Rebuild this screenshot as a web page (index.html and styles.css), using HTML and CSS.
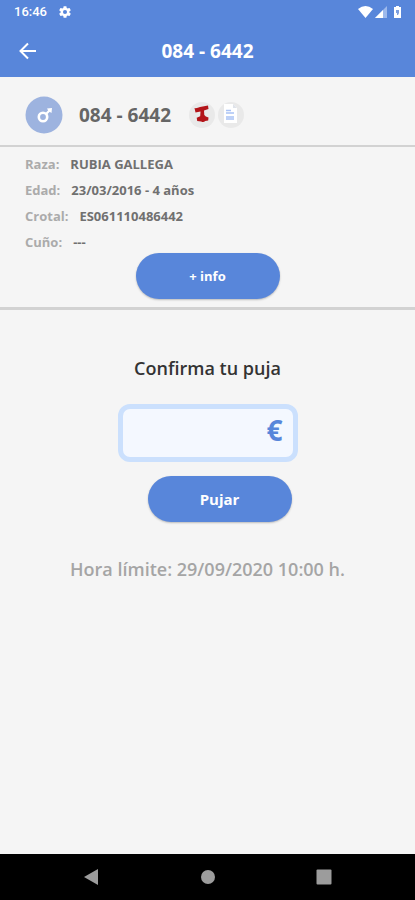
FILE: index.html
```html
<!DOCTYPE html>
<html lang="es">
<head>
<meta charset="utf-8">
<meta name="viewport" content="width=device-width, initial-scale=1">
<title>Puja</title>
<link rel="stylesheet" href="styles.css">
</head>
<body>
<div class="status">
  <span class="clock">16:46</span>
  <svg class="gear" width="14" height="14" viewBox="0 0 24 24" aria-hidden="true"><path fill="#fff" fill-rule="evenodd" d="M19.4 13a7.500 7.500 0 0 0 0-2l2.200-1.700a.5.5 0 0 0 .1-.6l-2-3.500a.5.5 0 0 0-.6-.2l-2.500 1a7.300 7.300 0 0 0-1.700-1L14.500 2.400a.5.5 0 0 0-.5-.4h-4a.5.5 0 0 0-.5.4L9.100 5a7.700 7.700 0 0 0-1.700 1l-2.500-1a.5.5 0 0 0-.6.200l-2 3.500a.5.5 0 0 0 .1.600L4.600 11a7.900 7.900 0 0 0 0 2l-2.200 1.700a.5.5 0 0 0-.1.600l2 3.500c.1.200.4.300.6.200l2.500-1a7.300 7.300 0 0 0 1.700 1l.4 2.600c0 .2.300.4.500.4h4c.2 0 .5-.2.500-.4l.4-2.600a7.700 7.700 0 0 0 1.700-1l2.500 1c.2.100.5 0 .6-.2l2-3.500a.5.5 0 0 0-.1-.6zM12 15.500a3.500 3.500 0 1 1 0-7 3.500 3.500 0 0 1 0 7z"/></svg>
  <svg class="signals" width="45" height="14" viewBox="0 0 45 14" aria-hidden="true">
    <path fill="#fff" d="M0 4Q7.500-2 15 4L7.500 13z"/>
    <path fill="#9db9ec" d="M29 1v12H17z"/>
    <path fill="#fff" d="M25 5v8h-8z"/>
    <path fill="#fff" d="M38 1h3v1h2v11h-7V2h2z"/>
    <path fill="#7d9fdf" d="M38 5h3v3l-1 2h-1V8h-1z"/>
  </svg>
</div>
<header class="appbar">
  <button class="back" type="button" aria-label="Atrás">
    <svg width="18" height="18" viewBox="0 0 18 18" aria-hidden="true"><path d="M17 9H2M9 1.500L1.500 9 9 16.500" fill="none" stroke="#fff" stroke-width="2"/></svg>
  </button>
  <h1 class="title">084 - 6442</h1>
</header>
<main class="content">
  <section class="animal">
    <svg width="38" height="38" viewBox="0 0 38 38" role="img" aria-label="Macho">
      <circle cx="19" cy="19" r="18.500" fill="#9db3df"/>
      <circle cx="18" cy="21" r="4.200" fill="none" stroke="#fff" stroke-width="2.600"/>
      <path d="M21 18L24.500 14.500" fill="none" stroke="#fff" stroke-width="2.200"/>
      <path d="M22 12.500l5-.5-.5 5-1.500-1-1.500-1z" fill="#fff"/>
    </svg>
    <h2 class="name">084 - 6442</h2>
    <div class="badges">
      <button class="badge" type="button" aria-label="Genealogía">
        <svg width="26" height="26" viewBox="0 0 26 26" aria-hidden="true"><path fill="#b31419" d="M5.500 6Q8 6.500 11 5l8-1.500.5 3.500-4.500 1.500.3 4.500q1 1.500 4.200 2.500l-.3 3-3 .5q-1.500 1.800-4 .5l-4-.4-.5-3.300 3.500-1.500L11.500 9.500l-5 1z"/></svg>
      </button>
      <button class="badge" type="button" aria-label="Documento">
        <svg width="26" height="26" viewBox="0 0 26 26" aria-hidden="true"><path fill="#fff" d="M6 2h9l4 4v15H6z"/><path fill="#dfe3ea" d="M15 2v4h4z"/><path d="M8 8.500h5M8 11h8M8 15h8M8 17h8" stroke="#a9c2f5" stroke-width="1.600"/></svg>
      </button>
    </div>
  </section>
  <section class="details">
    <dl class="facts">
      <div class="fact"><dt>Raza:</dt><dd>RUBIA GALLEGA</dd></div>
      <div class="fact"><dt>Edad:</dt><dd>23/03/2016 - 4 años</dd></div>
      <div class="fact"><dt>Crotal:</dt><dd>ES061110486442</dd></div>
      <div class="fact"><dt>Cuño:</dt><dd>---</dd></div>
    </dl>
    <button class="pill small" type="button">+ info</button>
  </section>
  <form class="bid">
    <label class="prompt" for="amount">Confirma tu puja</label>
    <div class="field">
      <input class="amount" id="amount" type="text" inputmode="numeric">
      <span class="currency">€</span>
    </div>
    <button class="pill send" type="button">Pujar</button>
    <p class="limit">Hora límite: 29/09/2020 10:00 h.</p>
  </form>
</main>
<nav class="system">
  <button type="button" aria-label="Volver"><svg width="16" height="16" viewBox="0 0 16 16"><path fill="#9c9c9c" d="M15 0v16L1 8z"/></svg></button>
  <button type="button" aria-label="Inicio"><svg width="16" height="16" viewBox="0 0 16 16"><circle cx="8" cy="8" r="7" fill="#9c9c9c"/></svg></button>
  <button type="button" aria-label="Recientes"><svg width="16" height="16" viewBox="0 0 16 16"><rect x=".5" y=".5" width="15" height="15" rx="1" fill="#9c9c9c"/></svg></button>
</nav>
</body>
</html>
```
FILE: styles.css
```css
* { box-sizing: border-box; }
body {
  margin: 0;
  min-height: 100vh;
  display: flex;
  flex-direction: column;
  background: #f5f5f5;
  color: #707070;
  font-family: "Open Sans", sans-serif;
  font-weight: 700;
}
h1, h2, p, dl, dd { margin: 0; }
button { padding: 0; border: 0; background: none; font: inherit; cursor: pointer; }
svg { display: block; }

.status {
  display: flex;
  align-items: center;
  height: 24px;
  padding: 0 12px 0 14px;
  background: #5886da;
  color: #fff;
}
.clock { font: 500 13px/24px Roboto, sans-serif; }
.gear { margin-left: 11px; }
.signals { margin-left: auto; }

.appbar {
  display: grid;
  grid-template-columns: 56px 1fr 56px;
  align-items: center;
  height: 53px;
  background: #5886da;
  color: #fff;
}
.back { justify-self: center; }
.title { font-size: 19px; line-height: 24px; text-align: center; }

.content { flex: 1; }
.animal {
  display: flex;
  align-items: center;
  height: 70px;
  padding: 8px 25px 0;
  border-bottom: 2px solid #d2d2d2;
}
.name { margin-left: 16px; color: #666; font-size: 19px; line-height: 24px; }
.badges { display: flex; gap: 3px; margin-left: 18px; }
.badge { border-radius: 50%; background: #e9e9e9; }

.details {
  display: flex;
  flex-direction: column;
  padding: 4px 25px 8px;
  border-bottom: 3px solid #d2d2d2;
}
.fact { display: flex; gap: 11px; font-size: 13px; line-height: 26px; }
.fact dt { color: #ababab; }

.pill {
  align-self: center;
  width: 144px;
  height: 46px;
  border-radius: 23px;
  background: #5886da;
  box-shadow: 0 1px 2px #bbb;
  color: #fff;
  font-size: 15px;
}
.small { margin-top: -2px; font-size: 13px; }

.bid { display: flex; flex-direction: column; align-items: center; padding-top: 46px; }
.prompt { color: #333; font-size: 18px; font-weight: 600; line-height: 24px; }
.field {
  display: flex;
  align-items: center;
  width: 180px;
  height: 58px;
  margin-top: 24px;
  padding: 0 10px 6px;
  border: 5px solid #cbe0fd;
  border-radius: 12px;
  background: #f4f8ff;
  color: #5886da;
}
.amount { flex: 1; min-width: 0; border: 0; outline: 0; background: none; color: inherit; font: inherit; font-size: 24px; text-align: right; }
.currency { font-size: 28px; line-height: 40px; }
.send { margin: 14px 0 0 24px; }
.limit { margin-top: 35px; color: #a5a5a5; font-size: 18px; font-weight: 600; line-height: 24px; }

.system {
  display: flex;
  justify-content: space-between;
  align-items: center;
  height: 46px;
  padding: 0 20%;
  background: #000;
}
```
